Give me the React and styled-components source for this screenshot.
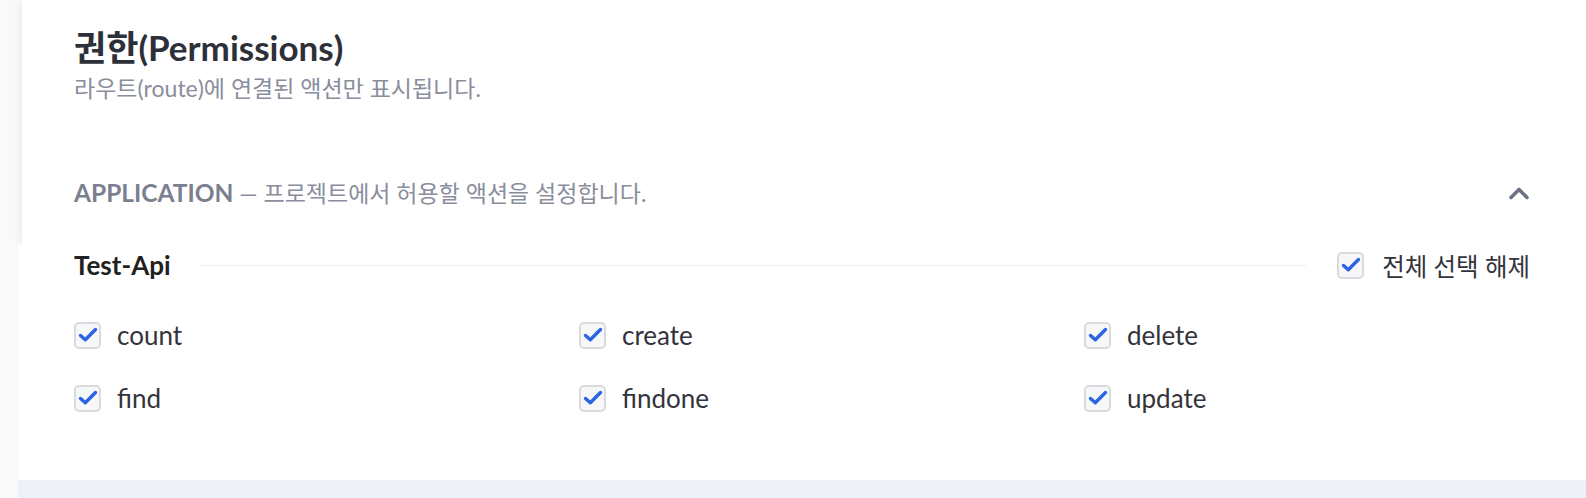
import React from 'react';
import styled, { createGlobalStyle } from 'styled-components';

const GlobalStyle = createGlobalStyle`
  html, body {
    margin: 0;
    padding: 0;
    background: #f9f9fa;
    font-family: 'Lato', 'Noto Sans CJK KR', sans-serif;
  }
`;

const Page = styled.div`
  width: 1586px;
  height: 498px;
  overflow: hidden;
  display: flex;
  flex-direction: column;
`;

const HeaderCard = styled.div`
  margin-left: 22px;
  height: 245px;
  flex-shrink: 0;
  box-sizing: border-box;
  padding: 26px 56px 0 52px;
  background: #fff;
  box-shadow: -6px 0 8px -4px rgba(40, 40, 70, 0.07);
  display: flex;
  flex-direction: column;
`;

const Title = styled.h1`
  margin: 0;
  font-size: 35px;
  line-height: 42px;
  font-weight: 700;
  color: #2e3039;
`;

const Subtitle = styled.p`
  margin: 6px 0 0 0;
  font-size: 23px;
  line-height: 28px;
  color: #8a8d9c;
`;

const SectionToggle = styled.div`
  margin-top: 76px;
  display: flex;
  align-items: center;
  justify-content: space-between;
`;

const SectionLabel = styled.div`
  font-size: 23px;
  line-height: 30px;
  color: #8a8d9c;

  strong {
    font-size: 24.5px;
    font-weight: 700;
    color: #7b7f8f;
  }
`;

const Body = styled.div`
  margin-left: 18px;
  height: 235px;
  flex-shrink: 0;
  box-sizing: border-box;
  padding: 5px 56px 0 56px;
  background: #fff;
`;

const GroupHeader = styled.div`
  display: flex;
  align-items: center;
  height: 30px;
`;

const GroupName = styled.div`
  font-size: 26px;
  font-weight: 700;
  color: #212121;
  white-space: nowrap;
`;

const Rule = styled.div`
  flex: 1;
  height: 1px;
  background: #eeeef1;
  margin: 0 31px 0 30px;
`;

const ActionGrid = styled.div`
  margin-top: 40px;
  display: grid;
  grid-template-columns: repeat(3, 505px);
  row-gap: 33px;
`;

const Item = styled.label`
  display: flex;
  align-items: center;
  gap: ${({ $gap }) => $gap}px;
  height: 30px;
  font-size: ${({ $size }) => $size}px;
  color: #33343b;
  cursor: pointer;
  white-space: nowrap;
`;

const Box = styled.span`
  width: 27px;
  height: 27px;
  box-sizing: border-box;
  border: 2px solid #dadade;
  border-radius: 5px;
  background: #f6f7f9;
  display: flex;
  align-items: center;
  justify-content: center;
  flex-shrink: 0;
`;

const Footer = styled.div`
  margin-left: 18px;
  flex: 1;
  background: #eef1f7;
`;

const Check = () => (
  <svg width="22" height="22" viewBox="0 0 22 22" fill="none">
    <path d="M3.5 11.5l4.8 4.3L18.5 5.5" stroke="#2b64e3" strokeWidth="3.4" strokeLinecap="round" strokeLinejoin="round" />
  </svg>
);

const ChevronUp = () => (
  <svg width="22" height="14" viewBox="0 0 22 14" fill="none">
    <path d="M3 11.5l8-8 8 8" stroke="#6e7287" strokeWidth="3.6" strokeLinecap="round" strokeLinejoin="round" />
  </svg>
);

const CheckItem = ({ label, size = 26, gap = 16 }) => (
  <Item $size={size} $gap={gap}>
    <Box><Check /></Box>
    {label}
  </Item>
);

const actions = ['count', 'create', 'delete', 'find', 'findone', 'update'];

export default function App() {
  return (
    <>
      <GlobalStyle />
      <Page>
        <HeaderCard>
          <Title>권한(Permissions)</Title>
          <Subtitle>라우트(route)에 연결된 액션만 표시됩니다.</Subtitle>
          <SectionToggle>
            <SectionLabel>
              <strong>APPLICATION</strong> — 프로젝트에서 허용할 액션을 설정합니다.
            </SectionLabel>
            <ChevronUp />
          </SectionToggle>
        </HeaderCard>
        <Body>
          <GroupHeader>
            <GroupName>Test-Api</GroupName>
            <Rule />
            <CheckItem label="전체 선택 해제" size={24.5} gap={18} />
          </GroupHeader>
          <ActionGrid>
            {actions.map(a => (
              <CheckItem key={a} label={a} />
            ))}
          </ActionGrid>
        </Body>
        <Footer />
      </Page>
    </>
  );
}
